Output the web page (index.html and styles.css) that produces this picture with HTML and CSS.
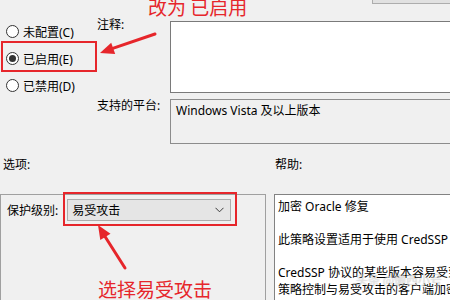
FILE: index.html
```html
<!DOCTYPE html>
<html lang="zh-CN">
<head>
<meta charset="utf-8">
<title>加密 Oracle 修复</title>
<link rel="stylesheet" href="styles.css">
</head>
<body>
<div class="page">
  <div class="topbar"><div class="navbtn"></div></div>

  <div class="main">
    <div class="radios">
      <div class="radio"><span class="dot"></span><span>未配置(C)</span></div>
      <div class="radio"><span class="dot on"></span><span>已启用(E)</span></div>
      <div class="radio"><span class="dot"></span><span>已禁用(D)</span></div>
    </div>
    <div class="fields">
      <div class="flabel">注释:</div>
      <div class="comment"></div>
      <div class="flabel plat">支持的平台:</div>
      <div class="platform">Windows Vista 及以上版本</div>
    </div>
  </div>

  <div class="labels">
    <div class="lab">选项:</div>
    <div class="lab help-lab">帮助:</div>
  </div>

  <div class="panels">
    <div class="options">
      <div class="opt-row">
        <span class="opt-label">保护级别:</span>
        <div class="combo">
          <span>易受攻击</span>
          <svg class="chev" width="9" height="6" viewBox="0 0 9 6"><polyline points="0.5,0.8 4.5,4.8 8.5,0.8" fill="none" stroke="#3c3c3c" stroke-width="1"/></svg>
        </div>
      </div>
    </div>
    <div class="help">
      <p>加密 Oracle 修复</p>
      <p class="gap">此策略设置适用于使用 CredSSP 身份验证的应用程序。</p>
      <p class="gap">CredSSP 协议的某些版本容易受到攻击。此</p>
      <p>策略控制与易受攻击的客户端加密</p>
    </div>
  </div>

  <div class="note note-top">改为 已启用</div>
  <div class="note note-bottom">选择易受攻击</div>
  <div class="redbox box1"></div>
  <div class="redbox box2"></div>
  <svg class="arrows" width="450" height="300" viewBox="0 0 450 300">
    <line x1="155" y1="34" x2="112" y2="48.6" stroke="#e6262b" stroke-width="3" stroke-linecap="round"/>
    <polygon points="100,53 115.2,54.1 111.2,42.7" fill="#e6262b"/>
    <line x1="125" y1="268" x2="105" y2="236.5" stroke="#e6262b" stroke-width="3" stroke-linecap="round"/>
    <polygon points="98,225 110.5,233.7 100.3,240.1" fill="#e6262b"/>
  </svg>
  <div class="wm">头条 @懒西小号</div>
</div>
</body>
</html>
```

FILE: styles.css
```css
html, body {
  margin: 0;
  padding: 0;
}
body {
  background: #f0f0f0;
  font-family: "Noto Sans", "Noto Sans CJK SC", sans-serif;
  font-size: 12px;
  color: #000;
}
.page {
  position: relative;
  width: 450px;
  height: 300px;
  overflow: hidden;
}
.topbar {
  height: 4px;
  display: flex;
}
.navbtn {
  margin-left: 372px;
  flex: 1;
  height: 3px;
  border: 1px solid #adadad;
  border-top: 0;
  border-right: 0;
  background: #e1e1e1;
}
.main {
  display: flex;
}
.radios {
  width: 97px;
  padding-top: 14px;
  box-sizing: border-box;
  padding-left: 6px;
}
.radio {
  height: 27px;
  display: flex;
  align-items: center;
  gap: 4px;
}
.dot {
  width: 11px;
  height: 11px;
  border: 1px solid #333;
  border-radius: 50%;
  background: #fff;
  display: flex;
  align-items: center;
  justify-content: center;
}
.dot.on::after {
  content: "";
  width: 7px;
  height: 7px;
  border-radius: 50%;
  background: #333;
}
.fields {
  flex: 1;
  display: grid;
  grid-template-columns: 73px 1fr;
  row-gap: 6px;
  margin-top: 17px;
  margin-right: -4px;
}
.flabel {
  line-height: 16px;
  margin-top: -4px;
}
.flabel.plat {
  margin-top: -1px;
}
.comment {
  height: 70px;
  border: 1px solid #7a7a7a;
  background: #fff;
}
.platform {
  height: 43px;
  border: 1px solid #8c8c8c;
  padding: 3px 5px;
  line-height: 16px;
  box-sizing: border-box;
  height: 45px;
}
.labels {
  display: grid;
  grid-template-columns: 274px 1fr;
  margin-top: 13px;
  line-height: 16px;
}
.lab {
  padding-left: 3px;
}
.help-lab {
  padding-left: 1px;
}
.panels {
  display: grid;
  grid-template-columns: 266px 1fr;
  column-gap: 8px;
  margin-top: 21px;
  margin-right: -4px;
}
.options {
  height: 130px;
  border: 1px solid #a0a0a0;
  box-sizing: border-box;
  padding: 4px 0 0 6px;
}
.opt-row {
  display: flex;
  align-items: center;
  gap: 9px;
}
.combo {
  width: 164px;
  height: 22px;
  box-sizing: border-box;
  border: 1px solid #adadad;
  background: #e5e5e5;
  display: flex;
  align-items: center;
  justify-content: space-between;
  padding: 0 6px 0 4px;
}
.chev {
  display: block;
}
.help {
  height: 130px;
  border: 1px solid #828282;
  background: #fff;
  box-sizing: border-box;
  padding: 4px 0 0 3px;
  line-height: 16.5px;
  white-space: nowrap;
  overflow: hidden;
}
.help p {
  margin: 0;
}
.help p.gap {
  margin-top: 16.5px;
}
.note {
  position: absolute;
  color: #e6262b;
  font-family: "Noto Sans CJK SC", sans-serif;
  font-size: 19px;
  line-height: 20px;
  white-space: nowrap;
}
.note-top {
  left: 148px;
  top: -3px;
}
.note-bottom {
  left: 98px;
  top: 279px;
}
.redbox {
  position: absolute;
  border: 2px solid #e6262b;
  box-sizing: border-box;
}
.box1 {
  left: 1px;
  top: 41px;
  width: 96px;
  height: 31px;
}
.box2 {
  left: 63px;
  top: 192px;
  width: 174px;
  height: 34px;
}
.arrows {
  position: absolute;
  left: 0;
  top: 0;
  pointer-events: none;
}
.wm {
  position: absolute;
  left: 356px;
  top: 271px;
  font-family: "Noto Sans CJK SC", sans-serif;
  font-size: 12px;
  color: rgba(255, 255, 255, 0.55);
  text-shadow: 0 0 1px rgba(90, 90, 90, 0.45);
  white-space: nowrap;
}
```
